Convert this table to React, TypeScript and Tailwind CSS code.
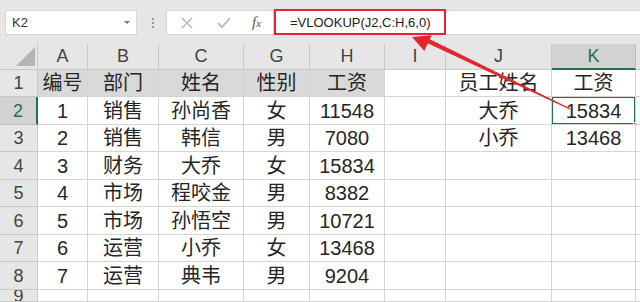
import { ReactNode } from 'react';

const COLS = ['A', 'B', 'C', 'G', 'H', 'I', 'J', 'K'];

const ROWS: string[][] = [
  ['编号', '部门', '姓名', '性别', '工资', '', '员工姓名', '工资'],
  ['1', '销售', '孙尚香', '女', '11548', '', '大乔', '15834'],
  ['2', '销售', '韩信', '男', '7080', '', '小乔', '13468'],
  ['3', '财务', '大乔', '女', '15834', '', '', ''],
  ['4', '市场', '程咬金', '男', '8382', '', '', ''],
  ['5', '市场', '孙悟空', '男', '10721', '', '', ''],
  ['6', '运营', '小乔', '女', '13468', '', '', ''],
  ['7', '运营', '典韦', '男', '9204', '', '', ''],
  ['', '', '', '', '', '', '', '']
];

const ROW_HEIGHTS = ['h-[27px]', 'h-[28px]', 'h-[27px]', 'h-[28px]', 'h-[27px]', 'h-[28px]', 'h-[27px]', 'h-[28px]', 'h-[12px]'];

const font = "font-['Liberation_Sans','Noto_Sans_CJK_SC',sans-serif]";

function Cell({ children, className = '' }: { children?: ReactNode; className?: string }) {
  return (
    <div
      className={`flex items-center justify-center overflow-hidden whitespace-nowrap border-r border-b border-[#d4d4d4] text-[20px] leading-none text-[#262626] ${className}`}
    >
      {children}
    </div>
  );
}

function Toolbar() {
  return (
    <div className="flex h-[44px] items-start bg-[#e6e6e6] pt-[10px]">
      <div className="ml-[5px] flex h-[25px] w-[132px] items-center justify-between border border-[#d6d6d6] bg-white pl-[6px] pr-[6px]">
        <span className="text-[13px] text-[#333]">K2</span>
        <span className="h-0 w-0 border-x-[3px] border-t-[3px] border-x-transparent border-t-[#777]" />
      </div>
      <div className="ml-[15px] mr-[12px] flex h-[25px] flex-col items-center justify-center gap-[2px]">
        <span className="h-[2px] w-[2px] bg-[#999]" />
        <span className="h-[2px] w-[2px] bg-[#999]" />
        <span className="h-[2px] w-[2px] bg-[#999]" />
      </div>
      <div className="flex h-[25px] w-[108px] items-center border border-[#d6d6d6] bg-white">
        <svg width="14" height="14" viewBox="0 0 14 14" className="ml-[13px]">
          <path d="M2 2 L12 12 M12 2 L2 12" stroke="#b3b3b3" strokeWidth="1.4" fill="none" />
        </svg>
        <svg width="14" height="12" viewBox="0 0 14 12" className="ml-[23px]">
          <path d="M1 6 L5 10 L13 1" stroke="#b3b3b3" strokeWidth="1.6" fill="none" />
        </svg>
        <span className="ml-[21px] font-['Liberation_Serif',serif] text-[15px] italic text-[#555]">
          f<span className="text-[11px]">x</span>
        </span>
      </div>
      <div className="relative flex h-[25px] flex-1 items-center border-y border-[#d6d6d6] bg-white">
        <div className="absolute -top-[2px] left-0 h-[26px] w-[172px] border-2 border-[#e3262b]" />
        <span className="ml-[16px] text-[13px] text-[#222]">=VLOOKUP(J2,C:H,6,0)</span>
      </div>
    </div>
  );
}

function Sheet() {
  return (
    <div className="grid grid-cols-[38px_50px_71px_85px_66px_75px_61px_106px_84px_4px]">
      {/* column headers */}
      <div className="flex h-[26px] items-end justify-end border-r border-b border-[#c8c8c8] bg-[#e6e6e6] pb-[3px] pr-[2px]">
        <span className="h-0 w-0 border-b-[19px] border-l-[19px] border-l-transparent border-b-[#b4b4b4]" />
      </div>
      {COLS.map((c) => (
        <div
          key={c}
          className={`flex h-[26px] items-center justify-center border-r text-[18px] ${
            c === 'K'
              ? 'border-b-2 border-r-[#bdbdbd] border-b-[#217346] bg-[#d2d2d2] text-[#217346]'
              : 'border-b border-[#c8c8c8] bg-[#e6e6e6] text-[#444]'
          }`}
        >
          {c}
        </div>
      ))}
      <div className="h-[26px] border-b border-[#c8c8c8] bg-[#e6e6e6]" />

      {ROWS.map((row, r) => (
        <RowCells key={r} row={row} index={r} />
      ))}
    </div>
  );
}

function RowCells({ row, index }: { row: string[]; index: number }) {
  const h = ROW_HEIGHTS[index];
  const selectedRow = index === 1;
  return (
    <>
      <div
        className={`flex ${h} items-center justify-center overflow-hidden text-[18px] leading-none ${
          selectedRow
            ? 'border-r-2 border-b border-r-[#217346] border-b-[#bdbdbd] bg-[#d2d2d2] text-[#217346]'
            : 'border-r border-b border-[#c8c8c8] bg-[#e6e6e6] text-[#444]'
        }`}
      >
        {index + 1}
      </div>
      {row.map((v, c) => {
        const filled = index === 0 && c < 5;
        const active = index === 1 && c === 7;
        return (
          <Cell key={c} className={`${h} ${filled ? 'bg-[#d9d9d9]' : 'bg-white'} ${active ? 'relative' : ''}`}>
            {v}
            {active && (
              <>
                <span className="pointer-events-none absolute -left-[1px] -top-[1px] h-[29px] w-[85px] border-2 border-[#217346]" />
                <span className="absolute -bottom-[3px] -right-[3px] h-[5px] w-[5px] border border-white bg-[#217346]" />
              </>
            )}
          </Cell>
        );
      })}
      <div className={`${h} border-b border-[#d4d4d4] bg-white`} />
    </>
  );
}

export default function App() {
  return (
    <div className={`relative h-[302px] w-[640px] overflow-hidden bg-white ${font}`}>
      <Toolbar />
      <Sheet />
      {/* callout arrow from the result cell to the formula */}
      <svg className="pointer-events-none absolute left-0 top-0" width="640" height="302" viewBox="0 0 640 302">
        <polygon points="425.5,42.3 427.3,38.1 570.4,108.4 569.8,109.6" fill="#e3262b" />
        <polygon points="412,37 431.6,35.3 424.3,51.1" fill="#e3262b" />
      </svg>
    </div>
  );
}
